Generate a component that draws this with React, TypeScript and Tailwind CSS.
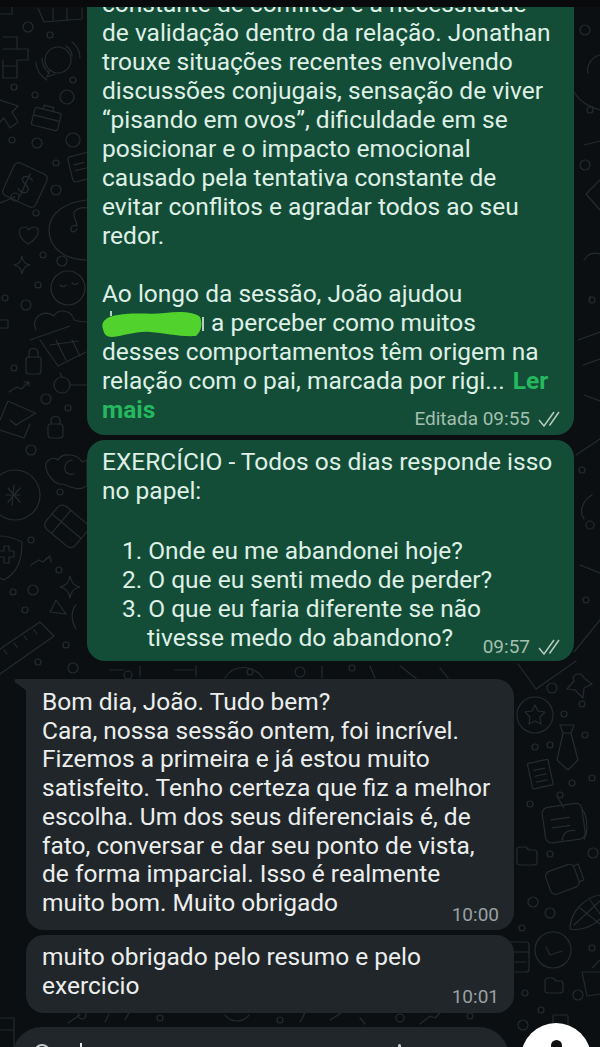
import React from 'react'

const font = "font-['Roboto','Liberation_Sans',sans-serif]"

// small rings scattered over the wallpaper: [x, y, r]
const rings: number[][] = [
  [28, 27, 5], [50, 35, 3], [73, 80, 3], [14, 87, 3], [35, 95, 3], [67, 97, 7], [12, 140, 3], [37, 143, 5], [73, 140, 7],
  [56, 163, 3], [56, 190, 5], [15, 197, 4], [36, 213, 3], [43, 255, 3], [62, 261, 5], [38, 285, 3], [5, 298, 3], [26, 305, 5],
  [14, 368, 3], [62, 385, 8], [46, 399, 5], [68, 408, 3], [31, 450, 5], [60, 492, 3], [31, 540, 3], [59, 570, 3],
  [13, 592, 3], [33, 590, 5], [25, 610, 3], [66, 645, 3], [73, 668, 5], [38, 662, 3],
  [552, 688, 5], [582, 704, 3], [564, 714, 3], [585, 735, 3], [535, 747, 3], [550, 745, 3], [572, 783, 3], [592, 778, 3],
  [530, 804, 3], [550, 854, 3], [593, 853, 5], [533, 902, 5], [550, 913, 5], [522, 928, 3], [592, 948, 3], [525, 993, 3],
  [541, 1010, 3], [578, 995, 5], [523, 1025, 5],
  [585, 30, 5], [590, 110, 3], [585, 165, 5], [592, 300, 3], [582, 470, 3], [590, 525, 4], [586, 600, 3],
  [300, 672, 5], [352, 668, 3], [128, 675, 4], [250, 672, 3], [82, 1015, 4], [160, 1018, 3], [280, 1020, 3], [400, 1018, 4], [470, 1016, 3],
]

// faint doodles of the chat wallpaper
const Doodles = () => (
  <svg className="absolute inset-0 h-[1047px] w-[600px]" viewBox="0 0 600 1047" fill="none" stroke="#252b2e" strokeWidth="1.2" strokeLinecap="round" strokeLinejoin="round">
    {rings.map(([x, y, r], i) => (
      <circle key={i} cx={x} cy={y} r={r} />
    ))}
    {/* window top-left */}
    <path d="M0 14h12v-8M38 8l6 14 38 -3V8M53 8v12M67 8v12" />
    {/* blocks */}
    <path d="M3 37h14v12h11v11h-11v18H3V60M3 49h14M3 66h14" />
    {/* speech bubble with waves */}
    <circle cx="58" cy="60" r="13" />
    <path d="M50 70l-3 7 8 -3M36 62c0 8 5 14 11 18M42 58c0 7 3 11 6 14M72 42c5 4 8 10 8 16M66 46c3 2 6 6 6 10" />
    {/* arrow */}
    <path d="M0 100l18 6 -6 6 6 10 -8 6 -6 -10 -4 4" />
    {/* briefcase */}
    <g transform="rotate(14 46 118)">
      <rect x="33" y="110" width="27" height="18" rx="2" />
      <path d="M41 110v-4h10v4M33 118h27" />
    </g>
    {/* price tag */}
    <g transform="rotate(25 25 185)">
      <rect x="7" y="167" width="36" height="36" rx="5" />
      <path d="M30 178c-3 -3 -10 -2 -10 2 0 5 10 3 10 9 0 4 -7 5 -10 2M25 173v24" />
    </g>
    <path d="M0 203l15 -6" />
    {/* notes */}
    <g transform="rotate(-14 82 167)">
      <rect x="70" y="154" width="24" height="26" rx="3" />
      <path d="M75 163h10M75 169h12" />
    </g>
    {/* headphone blob */}
    <path d="M87 200c-20 2 -38 12 -38 30 0 18 16 30 38 30M74 212c6 -6 12 -4 13 -4M74 212c-1 5 3 10 3 14M77 226c-4 -2 -7 1 -6 4 1 3 5 2 6 -1" />
    {/* heart and sparkle */}
    <path d="M28 244c-12 -8 -10 -17 -4 -17 3 0 4 2 4 3 1 -1 3 -3 6 -3 7 0 6 10 -6 17z" />
    <path d="M22 256c1 6 3 8 8 9 -5 1 -7 3 -8 9 -1 -6 -3 -8 -8 -9 5 -1 7 -3 8 -9z" />
    {/* smile and hearts */}
    <circle cx="68" cy="288" r="17" />
    <path d="M60 285c2 2 4 2 6 0M72 283c2 2 4 2 6 0" />
    <path d="M36 330c-6 -12 8 -22 18 -14 4 -8 18 -6 20 4 6 2 12 2 13 2M30 340l40 -14M0 320h8v8H0" />
    {/* cart */}
    <path d="M40 340l18 26 28 -14M50 345l28 -4M56 340l10 20M72 340l8 16M60 373l2 4M70 385h17" />
    {/* lock */}
    <rect x="26" y="357" width="15" height="17" rx="3" />
    <path d="M29 357v-4c0 -6 9 -6 9 0v4" />
    {/* trend arrow */}
    <path d="M9 392l8 -5 4 2 8 -7M24 382h5v4" />
    {/* envelope */}
    <path d="M0 420l8 -19 27 12M30 424l-6 14 -18 -6 -6 -2M10 420l6 5 20 -12" />
    <rect x="48" y="424" width="15" height="14" rx="3" />
    <path d="M51 424v-3c0 -6 9 -6 9 0v3" />
    {/* cloud */}
    <path d="M46 468c-2 -8 8 -12 12 -8 4 -8 20 -6 24 2l5 -2v26c-10 6 -18 0 -24 -2 -8 2 -16 -10 -17 -16zM72 460c-6 1 -9 7 -6 12 2 2 5 3 8 2" />
    {/* compass */}
    <circle cx="15" cy="495" r="25" />
    <path d="M14 485l-2 20M6 495h14M8 488l12 14M20 488L8 502" />
    {/* box */}
    <g transform="rotate(40 65 525)">
      <rect x="48" y="510" width="38" height="30" rx="6" />
      <path d="M48 525h38M60 510v30" />
    </g>
    {/* shield with cross */}
    <path d="M0 536c10 0 16 3 22 6 0 18 -4 30 -18 38l-4 -2M0 551h4v-5h5v5h5v6h-5v6H4v-6H0" />
    <path d="M31 565l8 -5 4 2 7 -6M46 558h5v4" />
    <path d="M70 576c1 6 4 10 10 11 -6 1 -9 5 -10 11 -1 -6 -4 -10 -10 -11 6 -1 9 -5 10 -11z" />
    <path d="M56 600l10 14 -16 -2zM76 605c-6 6 -4 18 0 24" />
    {/* ruler */}
    <path d="M0 649l40 -27 14 14L0 674M4 650l3 4M14 643l3 4M24 636l3 4M34 630l3 4" />
    {/* bottom left window */}
    <path d="M0 1018h14v29M0 1030h14" />
    {/* strip between bubbles */}
    <path d="M110 670h14M140 666v10M175 670h18M196 666v10M225 678c8 -14 28 -14 38 0M322 666v12M370 666l5 12M400 666c6 4 12 10 16 12M440 668l8 10" />
    <path d="M68 1023l12 -8M105 1022l4 -8M125 1020l4 -7M225 1015c6 8 18 8 24 0M300 1022c4 -6 6 -10 4 -14M330 1020c6 -4 10 -6 12 -8M360 1018l5 6M420 1024l10 -8 5 2 6 -6" />
    {/* right side, upper */}
    <path d="M600 55c-8 2 -14 10 -12 18M574 92c6 10 14 14 26 18M584 145l16 -4M600 180l-14 14 14 16M584 260c4 -6 10 -8 16 -6" />
    <path d="M578 340l22 -8M590 300v-4M583 365l17 -6M584 395l16 6M576 455l24 -16M592 495c-8 4 -14 16 -8 24M580 565l20 8M600 620l-26 32" />
    {/* rotated bar */}
    <path d="M518 664l18 25 40 -28" />
    {/* pawn */}
    <path d="M578 674c-4 0 -6 4 -4 7l-7 8 8 1 8 8 1 -10 8 -4 -8 -6c0 -2 -3 -4 -6 -4z" />
    {/* star badge */}
    <circle cx="535" cy="715" r="18" />
    <path d="M535 705l3 6 7 1 -5 5 1 7 -6 -3 -6 3 1 -7 -5 -5 7 -1z" />
    {/* tie */}
    <path d="M560 725h14l-3 8 7 27 -10 10 -11 -10 6 -27zM563 733h8" />
    {/* list */}
    <g transform="rotate(-12 541 775)">
      <rect x="530" y="761" width="21" height="26" rx="1" />
      <path d="M535 769h11M535 775h11M535 781h11" />
    </g>
    {/* bag with pin */}
    <g transform="rotate(-8 565 825)">
      <rect x="544" y="805" width="40" height="36" rx="6" />
      <path d="M552 818h18M552 826h18M584 812c4 4 4 22 -2 30M560 840c2 -8 8 -10 14 -8" />
    </g>
    <circle cx="560" cy="795" r="3" />
    <path d="M558 798l6 10" />
    {/* folder */}
    <path d="M517 862v-12c0 -2 1 -3 3 -3h6l3 3h6c2 0 2 2 2 3v9c0 2 -1 3 -3 3h-14c-2 0 -3 -1 -3 -3z" />
    {/* jar */}
    <g transform="rotate(-20 563 878)">
      <rect x="547" y="867" width="30" height="24" rx="5" />
      <path d="M577 870h5v17h-5" />
    </g>
    {/* corn */}
    <path d="M600 895c-14 2 -30 16 -30 34 10 2 22 -2 30 -10M574 925l26 -24M590 900l10 14M580 908l20 16" />
    {/* clock */}
    <circle cx="553" cy="950" r="18" />
    <path d="M546 947l4 8 12 -4" />
    {/* calendar */}
    <path d="M510 942h16c2 0 3 1 3 3v24c0 2 -1 3 -3 3h-16M512 952h17M512 962h14" />
    {/* folder */}
    <path d="M545 990v-9c0 -2 1 -3 3 -3h5l3 3h5c2 0 2 2 2 3v6c0 2 -1 3 -3 3h-12c-2 0 -3 -1 -3 -3z" />
    {/* cup */}
    <path d="M582 972h18M582 972l5 24 13 -2M600 960l-8 8" />
    <rect x="553" y="1015" width="15" height="12" rx="1" />
  </svg>
)

const DoubleCheck = () => (
  <svg className="h-[16px] w-[22px]" viewBox="0 0 22 16" fill="none" stroke="#b5cbbf" strokeWidth="1.5">
    <path d="M1 9l5 6L16 1M11.5 14.5L21 1" />
  </svg>
)

const App: React.FC = () => {
  return (
    <div className={`relative h-[1047px] w-[600px] overflow-hidden bg-[#0b0f11] ${font} text-[24.5px] leading-[29px]`}>
      <Doodles />

      <div className="relative flex flex-col">
        <div className="relative z-10 h-[7px] bg-[#080a0b]" />

        {/* outgoing: session summary */}
        <div className="ml-[87px] mr-[26px] h-[428px] overflow-hidden rounded-b-[18px] bg-[#144d37] pl-[15px] pr-[14px] text-[#dff0e6]">
          <p className="-mt-[18px] whitespace-nowrap">constante de conflitos e a necessidade</p>
          <p className="whitespace-nowrap">de validação dentro da relação. Jonathan</p>
          <p className="whitespace-nowrap">trouxe situações recentes envolvendo</p>
          <p className="whitespace-nowrap">discussões conjugais, sensação de viver</p>
          <p className="whitespace-nowrap">“pisando em ovos”, dificuldade em se</p>
          <p className="whitespace-nowrap">posicionar e o impacto emocional</p>
          <p className="whitespace-nowrap">causado pela tentativa constante de</p>
          <p className="whitespace-nowrap">evitar conflitos e agradar todos ao seu</p>
          <p className="whitespace-nowrap">redor.</p>
          <p className="h-[29px]" />
          <p className="whitespace-nowrap">Ao longo da sessão, João ajudou</p>
          <p className="relative whitespace-nowrap pl-[109px]">
            a perceber como muitos
            <svg className="absolute -left-[2px] top-0 h-[32px] w-[106px]" viewBox="100 309 106 32" fill="none">
              <path d="M203 318v14M111 312v5" stroke="#dff0e6" strokeWidth="1.6" />
              <path d="M103 330C100 322 108 317 118 316C135 313 150 316 165 314C180 312 195 313 200 318C203 325 201 333 196 337C180 338 165 334 150 333C135 332 125 337 112 338C105 338 104 334 103 330Z" fill="#52d22c" />
            </svg>
          </p>
          <p className="whitespace-nowrap">desses comportamentos têm origem na</p>
          <p className="whitespace-nowrap">
            relação com o pai, marcada por rigi... <span className="ml-[2px] font-bold text-[#25b95f]">Ler</span>
          </p>
          <div className="flex items-end justify-between">
            <span className="font-bold text-[#25b95f]">mais</span>
            <span className="flex translate-y-[7px] items-center gap-[8px] text-[19px] leading-[24px] text-[#a3bfb0]">
              Editada 09:55 <DoubleCheck />
            </span>
          </div>
        </div>

        {/* outgoing: exercise */}
        <div className="ml-[87px] mr-[26px] mt-[5px] h-[221px] rounded-[18px] bg-[#144d37] pl-[15px] pr-[14px] pt-[7px] text-[#dff0e6]">
          <p className="whitespace-nowrap">EXERCÍCIO - Todos os dias responde isso</p>
          <p>no papel:</p>
          <p className="h-[29px]" />
          <ol className="mt-[2px] pl-[20px]">
            <li className="flex gap-[6px]"><span>1.</span><span>Onde eu me abandonei hoje?</span></li>
            <li className="flex gap-[6px]"><span>2.</span><span>O que eu senti medo de perder?</span></li>
            <li className="flex gap-[6px]"><span>3.</span><span>O que eu faria diferente se não</span></li>
            <li className="flex items-end justify-between pl-[25px]">
              <span>tivesse medo do abandono?</span>
              <span className="flex translate-y-[7px] items-center gap-[8px] text-[19px] leading-[24px] text-[#a3bfb0]">
                09:57 <DoubleCheck />
              </span>
            </li>
          </ol>
        </div>

        {/* incoming */}
        <div className="relative ml-[26px] mt-[18px] h-[251px] w-[488px] rounded-[18px] rounded-tl-none bg-[#202629] px-[16px] pt-[9px] leading-[28.7px] text-[#eceeee]">
          <svg className="absolute -left-[12px] top-0 h-[12px] w-[13px]" viewBox="0 0 13 12" fill="#202629">
            <path d="M13 0H3C0 0 0 2 1.500 3.500L13 12z" />
          </svg>
          <p>Bom dia, João. Tudo bem?</p>
          <p className="whitespace-nowrap">Cara, nossa sessão ontem, foi incrível.</p>
          <p className="whitespace-nowrap">Fizemos a primeira e já estou muito</p>
          <p className="whitespace-nowrap">satisfeito. Tenho certeza que fiz a melhor</p>
          <p className="whitespace-nowrap">escolha. Um dos seus diferenciais é, de</p>
          <p className="whitespace-nowrap">fato, conversar e dar seu ponto de vista,</p>
          <p className="whitespace-nowrap">de forma imparcial. Isso é realmente</p>
          <div className="flex items-end justify-between">
            <span>muito bom. Muito obrigado</span>
            <span className="-mr-[1px] translate-y-[9px] text-[19px] leading-[24px] text-[#9aa0a3]">10:00</span>
          </div>
        </div>

        <div className="ml-[26px] mt-[5px] h-[78px] w-[488px] rounded-[18px] bg-[#202629] px-[16px] pt-[8px] leading-[28.7px] text-[#eceeee]">
          <p>muito obrigado pelo resumo e pelo</p>
          <div className="flex items-end justify-between">
            <span>exercicio</span>
            <span className="-mr-[1px] translate-y-[9px] text-[19px] leading-[24px] text-[#9aa0a3]">10:01</span>
          </div>
        </div>

        {/* message box, cut off by the bottom edge */}
        <div className="mt-[14px] flex items-start justify-between pl-[12px] pr-[9px]">
          <div className="relative h-[60px] w-[497px] rounded-[30px] bg-[#202629]">
            <span className="absolute left-[22px] top-[17px] h-[16px] w-[16px] rounded-full border-2 border-[#c9cdce]" />
            <span className="absolute left-[68px] top-[16px] h-[10px] w-[2px] bg-[#e6e8e8]" />
            <span className="absolute left-[386px] top-[17px] h-[10px] w-[3px] rounded-t-full bg-[#c9cdce]" />
          </div>
          <div className="-mt-[4px] flex h-[70px] w-[70px] justify-center rounded-full bg-white pt-[17px]">
            <span className="h-[14px] w-[11px] rounded-t-full bg-[#111]" />
          </div>
        </div>
      </div>
    </div>
  )
}

export default App
